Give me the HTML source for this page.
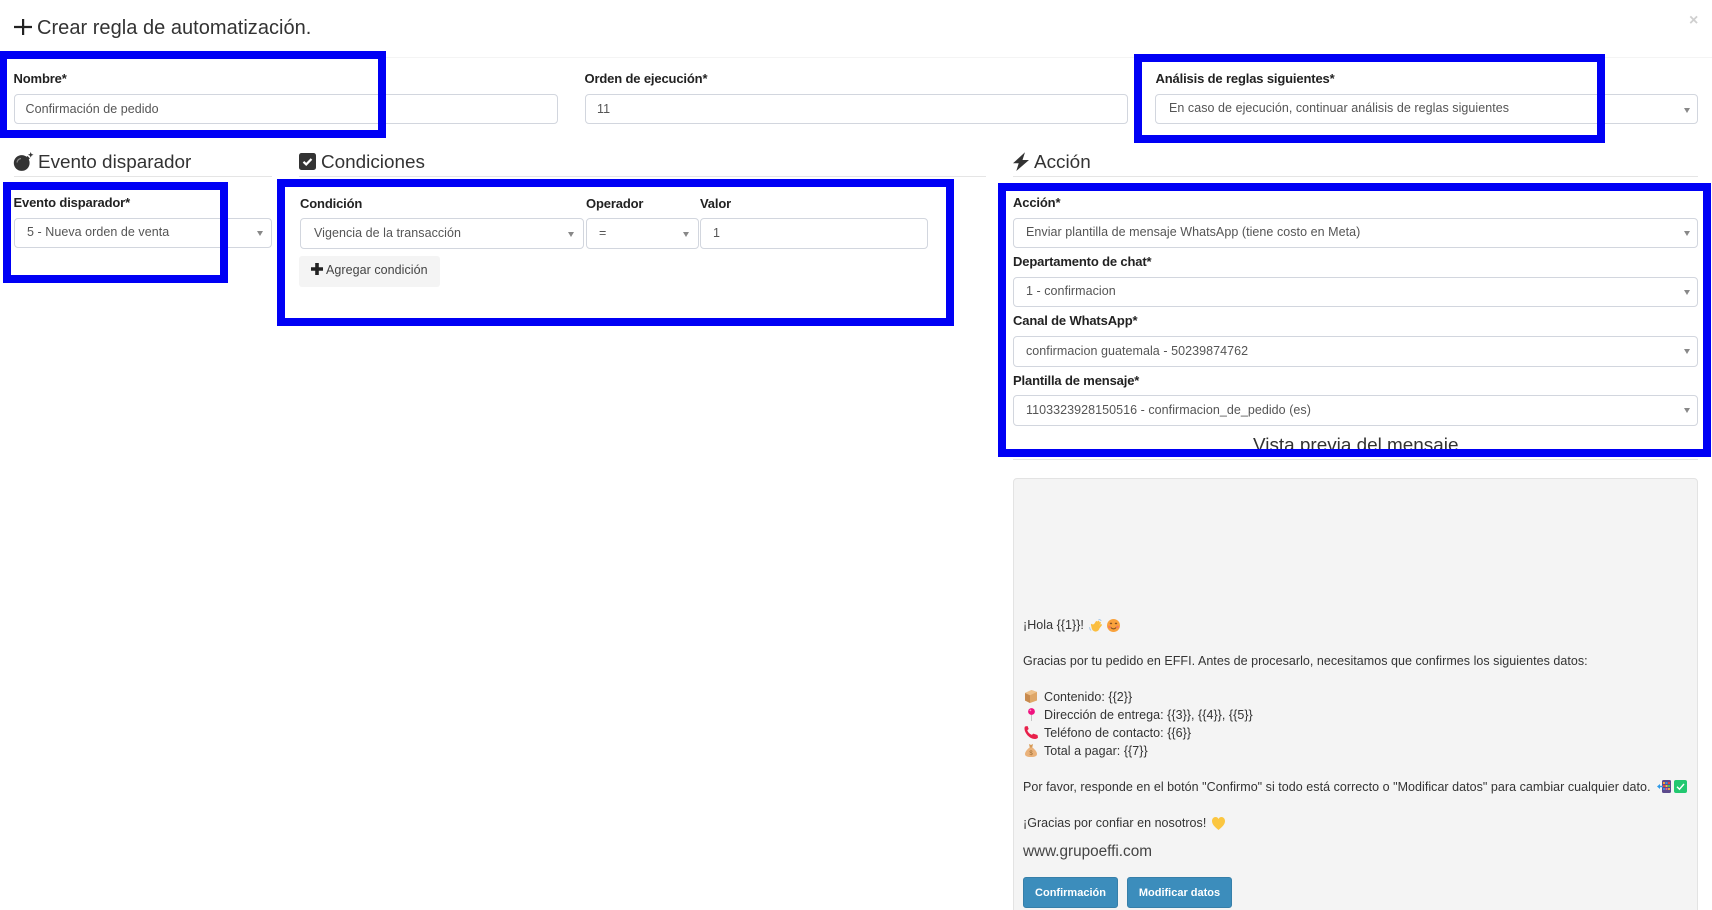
<!DOCTYPE html>
<html lang="es">
<head>
<meta charset="utf-8">
<title>Crear regla de automatización</title>
<style>
html,body{margin:0;padding:0;background:#fff;width:1712px;height:910px;overflow:hidden;}
#p{position:relative;width:1712px;height:910px;overflow:hidden;font-family:"Liberation Sans",Arial,sans-serif;color:#333;}
.t{position:absolute;white-space:pre;line-height:18px;}
.l{font-weight:700;font-size:13px;letter-spacing:-.15px;color:#222;}
.f{position:absolute;box-sizing:border-box;background:#fff;border:1px solid #d2d6de;border-radius:4px;height:30px;}
.v{font-size:12.5px;letter-spacing:.05px;color:#555;}
.a{position:absolute;width:0;height:0;border-left:3.5px solid transparent;border-right:3.5px solid transparent;border-top:5px solid #888;}
.b{position:absolute;box-sizing:border-box;border:8px solid #0000f5;z-index:5;}
.h{font-size:18.9px;color:#333;}
.ln{position:absolute;height:1px;background:#e5e5e5;}
.m{font-size:12.5px;letter-spacing:.04px;color:#333;}
svg{position:absolute;display:block;}
.btn{position:absolute;box-sizing:border-box;top:877px;height:31px;background:#3c8dbc;border:1px solid #367fa9;border-radius:3px;color:#fff;font-size:11px;font-weight:700;line-height:31px;text-align:center;}
</style>
</head>
<body>
<div id="p">

<!-- header -->
<svg style="left:14px;top:19px" width="18" height="16" viewBox="0 0 18 16"><path d="M8 0h2.200v6.900H18v2.200h-7.800V16H8V9.100H0V6.900h8z" fill="#222"/></svg>
<div class="t" style="left:37px;top:16px;font-size:20px;line-height:24px;letter-spacing:.03px;color:#333">Crear regla de automatización.</div>
<div class="t" style="left:1689px;top:12px;font-size:16px;font-weight:700;color:#cfcfcf">×</div>
<div class="ln" style="left:0;top:57px;width:1712px;background:#f4f4f4"></div>

<!-- row 1 -->
<div class="t l" style="left:13.500px;top:70px">Nombre*</div>
<div class="f" style="left:14px;top:94px;width:544px"></div>
<div class="t v" style="left:25.500px;top:100px">Confirmación de pedido</div>

<div class="t l" style="left:584.500px;top:70px">Orden de ejecución*</div>
<div class="f" style="left:585px;top:94px;width:543px"></div>
<div class="t v" style="left:597px;top:100px">11</div>

<div class="t l" style="left:1155.500px;top:70px">Análisis de reglas siguientes*</div>
<div class="f" style="left:1155px;top:94px;width:543px"></div>
<div class="t v" style="left:1169px;top:99px">En caso de ejecución, continuar análisis de reglas siguientes</div>
<div class="a" style="left:1684px;top:108px"></div>

<!-- section headings -->
<svg style="left:13px;top:152px" width="22" height="20" viewBox="0 0 22 20"><circle cx="8.700" cy="11" r="7.900" fill="#333"/><path d="M12.500 6l2-2 2.400 2.400-2 2z" fill="#333"/><path d="M17.700 0l.8 2 2 .8-2 .8-.8 2-.8-2-2-.8 2-.8z" fill="#333"/><path d="M4 10.500a4.800 4.800 0 0 1 4-4" stroke="#888" stroke-width="1.200" fill="none"/></svg>
<div class="t h" style="left:38px;top:154px">Evento disparador</div>
<div class="ln" style="left:14px;top:176px;width:258px"></div>

<svg style="left:299px;top:153px" width="17" height="17" viewBox="0 0 17 17"><rect width="17" height="17" rx="2.500" fill="#333"/><path d="M4.500 8.800l2.700 2.600L12.500 6" stroke="#fff" stroke-width="2.200" fill="none"/></svg>
<div class="t h" style="left:321px;top:154px">Condiciones</div>
<div class="ln" style="left:299px;top:176px;width:687px"></div>

<svg style="left:1013px;top:152px" width="16" height="19" viewBox="0 0 16 19"><path d="M12 .3L0 11.200h5.700L3.300 19 16 8h-6.500z" fill="#333"/></svg>
<div class="t h" style="left:1034px;top:154px">Acción</div>
<div class="ln" style="left:1013px;top:176px;width:685px"></div>

<!-- evento -->
<div class="t l" style="left:13.500px;top:193.500px">Evento disparador*</div>
<div class="f" style="left:14px;top:218px;width:258px"></div>
<div class="t v" style="left:27px;top:223px">5 - Nueva orden de venta</div>
<div class="a" style="left:257px;top:231px"></div>

<!-- condiciones -->
<div class="t l" style="left:300px;top:194.500px">Condición</div>
<div class="t l" style="left:586px;top:194.500px">Operador</div>
<div class="t l" style="left:700px;top:194.500px">Valor</div>
<div class="f" style="left:300px;top:218px;width:284px;height:31px"></div>
<div class="t v" style="left:314px;top:224px">Vigencia de la transacción</div>
<div class="a" style="left:568px;top:231.500px"></div>
<div class="f" style="left:586px;top:218px;width:113px;height:31px"></div>
<div class="t v" style="left:599px;top:224px">=</div>
<div class="a" style="left:683px;top:231.500px"></div>
<div class="f" style="left:700px;top:218px;width:228px;height:31px"></div>
<div class="t v" style="left:713px;top:224px">1</div>

<div style="position:absolute;left:299px;top:256px;width:141px;height:31px;background:#f4f4f4;border-radius:3px"></div>
<svg style="left:311px;top:263px" width="12" height="12" viewBox="0 0 12 12"><path d="M4.200 0h3.600v4.200H12v3.600H7.800V12H4.200V7.800H0V4.200h4.200z" fill="#222"/></svg>
<div class="t" style="left:326px;top:260.500px;font-size:12.500px;letter-spacing:.05px;color:#444">Agregar condición</div>

<!-- accion -->
<div class="t l" style="left:1013px;top:193.500px">Acción*</div>
<div class="f" style="left:1013px;top:218px;width:685px"></div>
<div class="t v" style="left:1026px;top:223px">Enviar plantilla de mensaje WhatsApp (tiene costo en Meta)</div>
<div class="a" style="left:1684px;top:231px"></div>

<div class="t l" style="left:1013px;top:252.500px">Departamento de chat*</div>
<div class="f" style="left:1013px;top:277px;width:685px"></div>
<div class="t v" style="left:1026px;top:282px">1 - confirmacion</div>
<div class="a" style="left:1684px;top:290px"></div>

<div class="t l" style="left:1013px;top:311.500px">Canal de WhatsApp*</div>
<div class="f" style="left:1013px;top:336px;width:685px;height:31px"></div>
<div class="t v" style="left:1026px;top:342px">confirmacion guatemala - 50239874762</div>
<div class="a" style="left:1684px;top:349px"></div>

<div class="t l" style="left:1013px;top:371.500px">Plantilla de mensaje*</div>
<div class="f" style="left:1013px;top:395px;width:685px;height:31px"></div>
<div class="t v" style="left:1026px;top:401px">1103323928150516 - confirmacion_de_pedido (es)</div>
<div class="a" style="left:1684px;top:408px"></div>

<div class="t h" style="left:1253px;top:437px">Vista previa del mensaje</div>
<div class="ln" style="left:1013px;top:459px;width:685px"></div>

<!-- preview panel -->
<div style="position:absolute;box-sizing:border-box;left:1013px;top:478px;width:685px;height:450px;background:#f4f4f4;border:1px solid #e3e3e3;border-radius:4px"></div>

<div class="t m" style="left:1023px;top:615.500px">¡Hola {{1}}!</div>
<svg style="left:1089px;top:619px" width="14" height="13" viewBox="0 0 14 13"><circle cx="6.600" cy="8.600" r="4" fill="#fbbe3f"/><path d="M5 7l2.500-4M6.800 7l2.700-4.400M8.500 7.500l2.500-3.700M9.500 9l2.500-3M3.500 8.500L2.800 5.800" stroke="#fbbe3f" stroke-width="1.800" stroke-linecap="round" fill="none"/><path d="M.5 8.200c.1 1.400.7 2.500 1.600 3.300M9.500.4c1.200 0 2.200.5 2.800 1.500" stroke="#a9c8e8" stroke-width="1" fill="none"/></svg>
<svg style="left:1107px;top:619px" width="13" height="13" viewBox="0 0 13 13"><circle cx="6.500" cy="6.500" r="6.500" fill="#f9a23c"/><circle cx="2.500" cy="8" r="1.400" fill="#f47d5c"/><circle cx="10.500" cy="8" r="1.400" fill="#f47d5c"/><path d="M3 5l1-1 1 1M8 5l1-1 1 1" stroke="#7a4a20" stroke-width=".9" fill="none"/><path d="M4 8.500c1.200 1.800 3.800 1.800 5 0" stroke="#7a4a20" stroke-width="1" fill="none"/></svg>

<div class="t m" style="left:1023px;top:651.500px">Gracias por tu pedido en EFFI. Antes de procesarlo, necesitamos que confirmes los siguientes datos:</div>

<svg style="left:1025px;top:690px" width="12" height="13" viewBox="0 0 12 13"><path d="M6.500 0L12 2v8.500L5 13 0 10.500V3z" fill="#dfa768"/><path d="M0 3l5 2.300V13L0 10.500z" fill="#c88a4e"/><path d="M6.500 0L12 2 5 5.300 0 3z" fill="#eec28c"/></svg>
<div class="t m" style="left:1044px;top:687.500px">Contenido: {{2}}</div>

<svg style="left:1027px;top:708px" width="9" height="13" viewBox="0 0 9 13"><path d="M4.500 6v7" stroke="#c4c4c4" stroke-width="1"/><circle cx="4.500" cy="3.500" r="3.400" fill="#f0127f"/><circle cx="3.400" cy="2.400" r=".9" fill="#ff8cc5"/></svg>
<div class="t m" style="left:1044px;top:705.500px">Dirección de entrega: {{3}}, {{4}}, {{5}}</div>

<svg style="left:1024px;top:726px" width="14" height="13" viewBox="0 0 14 13"><path d="M1 .5l2.500-.5 1.200 3-1.400 1.200c.8 2.300 2.400 3.800 4.600 4.700l1.300-1.300L13.500 9 14 11.500c-.5.800-1.500 1.500-3 1.500C5.500 13 .5 7 .5 2.500.5 1.800.7 1 1 .5z" fill="#e8204a"/></svg>
<div class="t m" style="left:1044px;top:723.500px">Teléfono de contacto: {{6}}</div>

<svg style="left:1025px;top:744px" width="12" height="13" viewBox="0 0 12 13"><path d="M4 0l2 1 2-1-.8 3.500h-2.400z" fill="#d69a56"/><path d="M4.500 3.500h3C10 5.500 12 8 12 10c0 2-2 3-6 3s-6-1-6-3c0-2 2-4.500 4.500-6.500z" fill="#eab27a"/><text x="6" y="11" font-size="6" text-anchor="middle" fill="#9a6a30" font-family="Liberation Sans">$</text></svg>
<div class="t m" style="left:1044px;top:741.500px">Total a pagar: {{7}}</div>

<div class="t m" style="left:1023px;top:777.500px">Por favor, responde en el botón "Confirmo" si todo está correcto o "Modificar datos" para cambiar cualquier dato.</div>
<svg style="left:1657px;top:780px" width="14" height="13" viewBox="0 0 14 13"><rect x="5" y="0" width="9" height="13" rx="1.500" fill="#5c4a8c"/><rect x="6" y="2" width="2" height="2" fill="#f2a03c"/><rect x="8.500" y="2" width="2" height="2" fill="#3c8de0"/><rect x="11" y="2" width="2" height="2" fill="#e04040"/><rect x="6" y="5" width="2" height="2" fill="#e04040"/><rect x="8.500" y="5" width="2" height="2" fill="#f2c23c"/><rect x="11" y="5" width="2" height="2" fill="#3cc060"/><rect x="6" y="8" width="2" height="2" fill="#3c8de0"/><rect x="8.500" y="8" width="2" height="2" fill="#e06090"/><rect x="11" y="8" width="2" height="2" fill="#f2a03c"/><path d="M0 6.500L3 4v1.700h3v1.600H3V9z" fill="#2f9ae8"/></svg>
<svg style="left:1674px;top:780px" width="13" height="13" viewBox="0 0 13 13"><rect width="13" height="13" rx="2" fill="#22c870"/><path d="M3 6.800l2.500 2.400L10 4" stroke="#fff" stroke-width="1.400" fill="none"/></svg>

<div class="t m" style="left:1023px;top:813.500px">¡Gracias por confiar en nosotros!</div>
<svg style="left:1212px;top:817px" width="13" height="13" viewBox="0 0 13 13"><path d="M6.500 13C3 10 0 7.500 0 4 0 1.500 1.800 0 3.500 0c1.400 0 2.400.8 3 2 .6-1.200 1.600-2 3-2C11.200 0 13 1.500 13 4c0 3.500-3 6-6.500 9z" fill="#fbc640"/></svg>

<div class="t" style="left:1023px;top:841.500px;font-size:15.300px;line-height:20px;color:#444">www.grupoeffi.com</div>

<div class="btn" style="left:1023px;width:95px">Confirmación</div>
<div class="btn" style="left:1127px;width:105px">Modificar datos</div>

<!-- blue annotation frames -->
<div class="b" style="left:0;top:51px;width:386px;height:87px;border-left-width:7px"></div>
<div class="b" style="left:3px;top:182px;width:225px;height:101px"></div>
<div class="b" style="left:277px;top:179px;width:677px;height:147px"></div>
<div class="b" style="left:1134px;top:54px;width:471px;height:89px"></div>
<div class="b" style="left:998px;top:183px;width:713px;height:274px"></div>

</div>
</body>
</html>
